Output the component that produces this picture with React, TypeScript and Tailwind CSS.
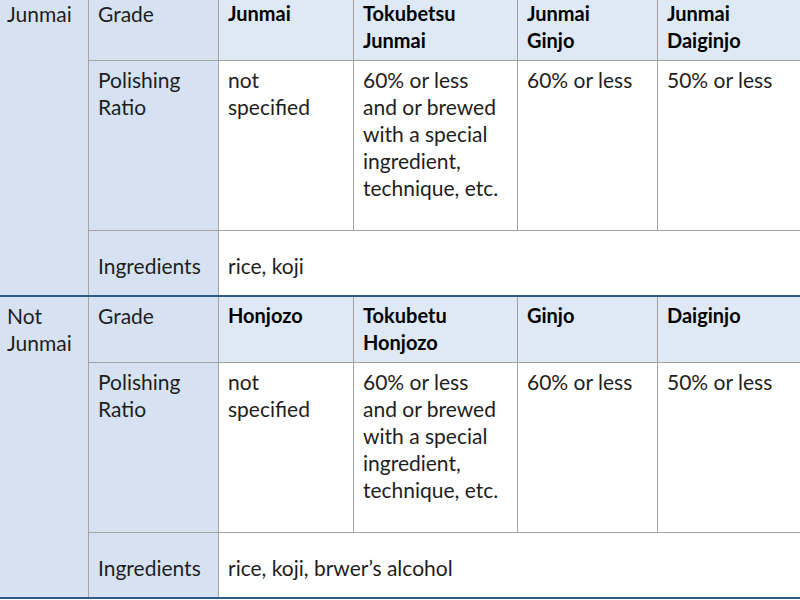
import React from 'react'

type Section = {
    group: string[]
    grades: string[][]
    ratios: string[][]
    ingredients: string
}

const sections: Section[] = [
    {
        group: ['Junmai'],
        grades: [['Junmai'], ['Tokubetsu', 'Junmai'], ['Junmai', 'Ginjo'], ['Junmai', 'Daiginjo']],
        ratios: [['not', 'specified'], ['60% or less', 'and or brewed', 'with a special', 'ingredient,', 'technique, etc.'], ['60% or less'], ['50% or less']],
        ingredients: 'rice, koji',
    },
    {
        group: ['Not', 'Junmai'],
        grades: [['Honjozo'], ['Tokubetu', 'Honjozo'], ['Ginjo'], ['Daiginjo']],
        ratios: [['not', 'specified'], ['60% or less', 'and or brewed', 'with a special', 'ingredient,', 'technique, etc.'], ['60% or less'], ['50% or less']],
        ingredients: 'rice, koji, brwer\u2019s alcohol',
    },
]

function Lines({ lines }: { lines: string[] }) {
    return (
        <>
            {lines.map((l, i) => (
                <div key={i}>{l}</div>
            ))}
        </>
    )
}

function SakeSection({ s }: { s: Section }) {
    return (
        <div className="grid grid-cols-[88px_130px_135px_164px_140px_160px] grid-rows-[66px_170px_64px] border-b-2 border-[#2f5a87]">
            <div className="row-span-3 bg-[#d6e2f2] pl-[7px] pt-[5px] text-[#1e1e1e]">
                <Lines lines={s.group} />
            </div>
            <div className="border-l border-b border-[#a3a3a3] bg-[#d6e2f2] pl-[9px] pt-[5px] text-[#1e1e1e]">Grade</div>
            {s.grades.map((g, i) => (
                <div key={i} className="border-l border-b border-[#a3a3a3] bg-[#dfe8f5] pl-[9px] pt-[5px] text-[20px] font-bold text-black">
                    <Lines lines={g} />
                </div>
            ))}
            <div className="border-l border-b border-[#a3a3a3] bg-[#d6e2f2] pl-[9px] pt-[5px] text-[#1e1e1e]">
                <Lines lines={['Polishing', 'Ratio']} />
            </div>
            {s.ratios.map((r, i) => (
                <div key={i} className="border-l border-b border-[#a3a3a3] bg-white pl-[9px] pt-[5px] text-[#1e1e1e]">
                    <Lines lines={r} />
                </div>
            ))}
            <div className="flex items-center border-l border-[#a3a3a3] bg-[#d6e2f2] pl-[9px] pt-[5px] text-[#1e1e1e]">Ingredients</div>
            <div className="col-span-4 flex items-center border-l border-[#a3a3a3] bg-white pl-[9px] pt-[5px] text-[#1e1e1e]">{s.ingredients}</div>
        </div>
    )
}

export default function App() {
    return (
        <div className="h-[600px] w-[800px] overflow-hidden bg-white font-['Lato','Liberation_Sans',sans-serif] text-[21px] leading-[27px]">
            <div className="-mt-[5px]">
                {sections.map((s, i) => (
                    <SakeSection key={i} s={s} />
                ))}
            </div>
        </div>
    )
}
